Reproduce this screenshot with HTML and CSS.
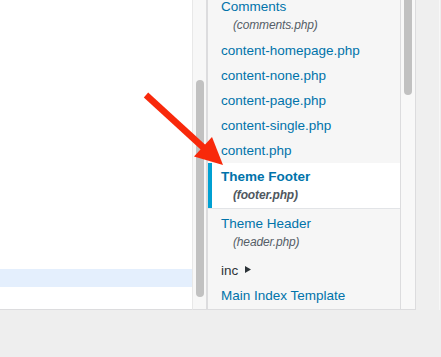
FILE: index.html
```html
<!DOCTYPE html>
<html lang="en">
<head>
<meta charset="utf-8">
<title>Theme File Editor</title>
<link rel="stylesheet" href="styles.css">
</head>
<body>
<div class="screen">
  <div class="workspace">
    <div class="code">
      <div class="line-active"></div>
    </div>
    <div class="vscroll editor-scroll"><div class="thumb editor-thumb"></div></div>
    <div class="sidebar">
      <div class="files">
        <ul class="file-list">
          <li class="file two"><a href="#">Comments<span class="fname">(comments.php)</span></a></li>
          <li class="file"><a href="#">content-homepage.php</a></li>
          <li class="file"><a href="#">content-none.php</a></li>
          <li class="file"><a href="#">content-page.php</a></li>
          <li class="file"><a href="#">content-single.php</a></li>
          <li class="file"><a href="#">content.php</a></li>
          <li class="file two current"><a href="#">Theme Footer<span class="fname">(footer.php)</span></a></li>
          <li class="file two"><a href="#">Theme Header<span class="fname">(header.php)</span></a></li>
          <li class="file folder">inc<svg class="caret" width="6" height="7" viewBox="0 0 6 7"><path d="M0 0 L6 3.5 L0 7 Z" fill="#2c3338"/></svg></li>
          <li class="file"><a href="#">Main Index Template</a></li>
        </ul>
      </div>
      <div class="vscroll side-scroll"><div class="thumb side-thumb"></div></div>
    </div>
    <div class="gutter"></div>
  </div>
  <svg class="arrow" width="441" height="357" viewBox="0 0 441 357">
    <line x1="146" y1="95" x2="205" y2="149" stroke="#f8290b" stroke-width="6.5"/>
    <polygon points="223,165 194,156.5 212,137" fill="#f8290b"/>
  </svg>
</div>
</body>
</html>
```
FILE: styles.css
```css
html, body {
  margin: 0;
  padding: 0;
}

body {
  background: #eeeeee;
  font-family: "Liberation Sans", Arial, sans-serif;
}

.screen {
  position: relative;
  width: 441px;
  height: 357px;
  overflow: hidden;
  background: #eeeeee;
}

.workspace {
  display: flex;
  height: 310px;
}

.code {
  flex: none;
  width: 192px;
  box-sizing: border-box;
  background: #ffffff;
  border-bottom: 1px solid #dcdcde;
  padding-top: 269px;
}

.line-active {
  height: 18px;
  background: #e4effd;
}

.vscroll {
  flex: none;
  width: 15px;
  box-sizing: border-box;
  background: #f7f7f7;
  border-bottom: 1px solid #dcdcde;
  overflow: hidden;
}

.editor-scroll {
  border-left: 1px solid #e8e8e8;
  border-right: 1px solid #dcdcde;
  padding: 80px 0 0 3px;
}

.thumb {
  width: 8px;
  background: #c1c1c1;
  border-radius: 4px;
}

.editor-thumb {
  height: 217px;
}

.sidebar {
  flex: none;
  display: flex;
  border-left: 1px solid #dcdcde;
  border-bottom: 1px solid #dcdcde;
  height: 310px;
  box-sizing: border-box;
}

.files {
  width: 193px;
  box-sizing: border-box;
  background: #f6f6f6;
  border-right: 1px solid #dcdcde;
  overflow: hidden;
}

.file-list {
  list-style: none;
  margin: -8px 0 0 0;
  padding: 0;
}

.file {
  font-size: 13.5px;
  line-height: 19px;
}

.file a {
  display: block;
  padding: 3px 0 3px 13px;
  color: #0073aa;
  text-decoration: none;
}

.file.two a {
  padding: 5px 0 4px 13px;
}

.fname {
  display: block;
  padding-left: 12px;
  font-size: 12px;
  line-height: 18px;
  font-style: italic;
  color: #555d66;
  letter-spacing: -0.15px;
}

.file.current {
  background: #ffffff;
  border-bottom: 1px solid #e2e4e7;
  box-shadow: inset 4px 0 0 #00a0d2;
}

.file.current a {
  padding: 4px 0 4px 13px;
  font-weight: bold;
}

.file.current .fname {
  font-weight: bold;
  color: #50575e;
}

.file.folder {
  padding: 6px 0 3px 13px;
  color: #2c3338;
}

.caret {
  margin-left: 7px;
  vertical-align: 2px;
}

.side-scroll {
  border-bottom: none;
  border-right: 1px solid #dcdcde;
  padding-left: 3px;
  background: #f8f8f8;
}

.side-thumb {
  margin-top: -10px;
  height: 105px;
}

.gutter {
  flex: none;
  width: 24px;
  box-sizing: border-box;
  border-right: 1px solid #f7f7f7;
  background: #efefef;
}

.arrow {
  position: absolute;
  left: 0;
  top: 0;
  pointer-events: none;
}
```
